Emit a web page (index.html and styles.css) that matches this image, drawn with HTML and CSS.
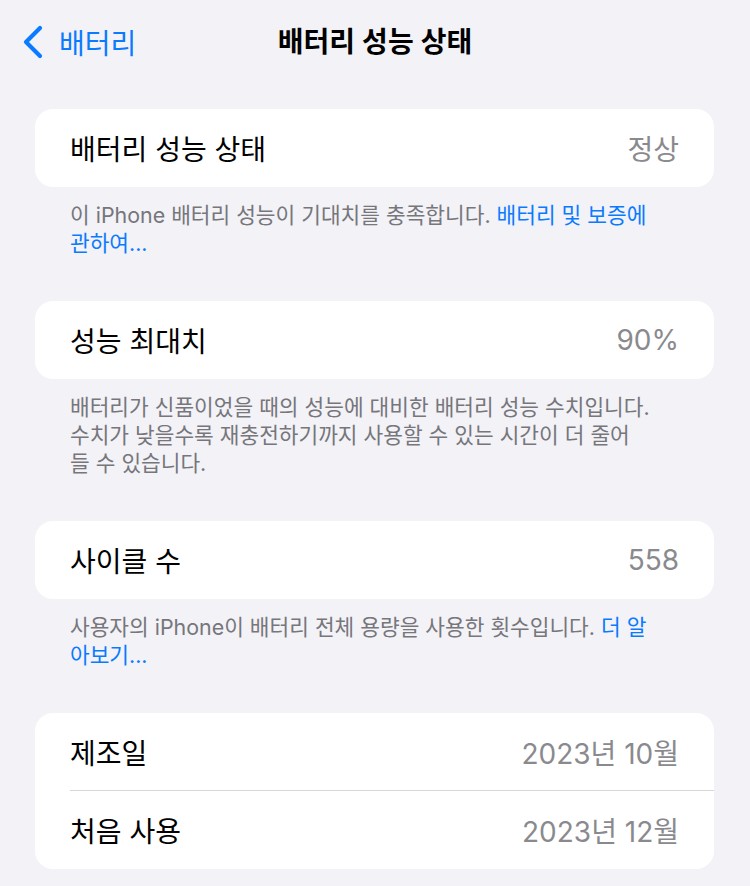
FILE: index.html
```html
<!DOCTYPE html>
<html lang="ko">
<head>
    <meta charset="UTF-8">
    <title>배터리 성능 상태</title>
    <link rel="stylesheet" href="styles.css">
</head>
<body>
<header class="nav-bar">
    <a class="nav-back" href="#">
        <svg class="nav-chevron" width="22" height="34" viewBox="0 0 22 34" aria-hidden="true">
            <path d="M19 3 L5 17 L19 31" fill="none" stroke="currentColor" stroke-width="4.2" stroke-linecap="round" stroke-linejoin="round"/>
        </svg>
        <span>배터리</span>
    </a>
    <h1 class="nav-title">배터리 성능 상태</h1>
</header>

<main class="settings">
    <section class="group">
        <div class="card">
            <div class="row">
                <span class="row-label">배터리 성능 상태</span>
                <span class="row-value">정상</span>
            </div>
        </div>
        <p class="footnote">이 iPhone 배터리 성능이 기대치를 충족합니다. <a href="#">배터리 및 보증에<br>관하여...</a></p>
    </section>

    <section class="group">
        <div class="card">
            <div class="row">
                <span class="row-label">성능 최대치</span>
                <span class="row-value">90%</span>
            </div>
        </div>
        <p class="footnote">배터리가 신품이었을 때의 성능에 대비한 배터리 성능 수치입니다.<br>수치가 낮을수록 재충전하기까지 사용할 수 있는 시간이 더 줄어<br>들 수 있습니다.</p>
    </section>

    <section class="group">
        <div class="card">
            <div class="row">
                <span class="row-label">사이클 수</span>
                <span class="row-value">558</span>
            </div>
        </div>
        <p class="footnote">사용자의 iPhone이 배터리 전체 용량을 사용한 횟수입니다. <a href="#">더 알<br>아보기...</a></p>
    </section>

    <section class="group">
        <div class="card">
            <div class="row">
                <span class="row-label">제조일</span>
                <span class="row-value">2023년 10월</span>
            </div>
            <div class="row">
                <span class="row-label">처음 사용</span>
                <span class="row-value">2023년 12월</span>
            </div>
        </div>
    </section>
</main>
</body>
</html>
```

FILE: styles.css
```css
body {
    background: #f2f2f7;
    color: #000;
    font-family: Inter, "Noto Sans CJK KR", sans-serif;
    margin: 0;
}

a {
    color: #0a7aff;
    text-decoration: none;
}

.nav-bar {
    align-items: center;
    display: flex;
    height: 80px;
    justify-content: center;
    position: relative;
}

.nav-back {
    align-items: center;
    display: flex;
    font-size: 28px;
    gap: 16px;
    left: 21px;
    position: absolute;
    top: 22px;
}

.nav-chevron {
    display: block;
}

.nav-title {
    font-size: 28px;
    font-weight: 600;
    margin: 0;
}

.settings {
    padding: 29px 36px 0 35px;
}

.group {
    margin-bottom: 44px;
}

.card {
    background: #fff;
    border-radius: 18px;
    overflow: hidden;
}

.row {
    align-items: center;
    display: flex;
    font-size: 28px;
    height: 78px;
    justify-content: space-between;
    padding: 0 35px;
    position: relative;
}

.row + .row::before {
    border-top: 1.5px solid #d6d6da;
    content: "";
    left: 35px;
    position: absolute;
    right: 0;
    top: -1px;
}

.row-value {
    color: #8a8a8e;
}

.footnote {
    color: #76767b;
    font-size: 21.4px;
    line-height: 28px;
    margin: 14px 0 0;
    padding: 0 35px;
}
```
